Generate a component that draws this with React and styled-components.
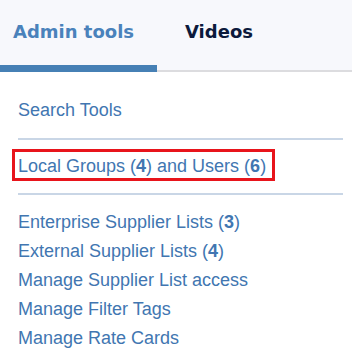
import styled, { createGlobalStyle } from 'styled-components'

const GlobalStyle = createGlobalStyle`
  html, body {
    margin: 0;
    padding: 0;
    background: #ffffff;
  }
  body {
    font-family: "Liberation Sans", Arial, sans-serif;
  }
`

const Page = styled.div`
  width: 352px;
  min-height: 360px;
  background: #ffffff;
`

const TabBar = styled.nav`
  display: flex;
  align-items: flex-end;
  height: 70px;
  background: #f7f8fc;
  border-bottom: 2px solid #dcdcdf;
`

const Tab = styled.div`
  box-sizing: border-box;
  height: 72px;
  margin-bottom: -2px;
  padding: ${p => (p.$active ? '21px 23px 0 13px' : '21px 0 0 28px')};
  width: ${p => (p.$active ? '157px' : 'auto')};
  font-family: "DejaVu Sans", Verdana, sans-serif;
  font-weight: bold;
  font-size: 18px;
  line-height: 22px;
  color: ${p => (p.$active ? '#4a82bb' : '#0c1a3c')};
  border-bottom: ${p => (p.$active ? '7px solid #4680b5' : 'none')};
  white-space: nowrap;
`

const Content = styled.div`
  padding: 28px 9px 0 18px;
`

const Link = styled.a`
  display: block;
  color: #4176b1;
  text-decoration: none;
  font-size: 18px;
  line-height: 20px;
  white-space: nowrap;

  b {
    font-weight: bold;
  }
`

const Divider = styled.hr`
  border: none;
  height: 2px;
  background: #c9d6e6;
  margin: ${p => p.$margin};
`

const Highlight = styled.div`
  display: flex;
  width: fit-content;
  margin-left: -6px;
  padding: 4px 6px 2px 3px;
  border: 3px solid #e8141b;
`

const List = styled.div`
  padding-top: 13px;

  ${Link} {
    line-height: 29px;
  }
`

export default function App() {
  return (
    <Page>
      <GlobalStyle />
      <TabBar>
        <Tab $active>Admin tools</Tab>
        <Tab>Videos</Tab>
      </TabBar>
      <Content>
        <Link>Search Tools</Link>
        <Divider $margin='18px 0 9px' />
        <Highlight>
          <Link>Local Groups (<b>4</b>) and Users (<b>6</b>)</Link>
        </Highlight>
        <Divider $margin='12px 0 0' />
        <List>
          <Link>Enterprise Supplier Lists (<b>3</b>)</Link>
          <Link>External Supplier Lists (<b>4</b>)</Link>
          <Link>Manage Supplier List access</Link>
          <Link>Manage Filter Tags</Link>
          <Link>Manage Rate Cards</Link>
        </List>
      </Content>
    </Page>
  )
}
